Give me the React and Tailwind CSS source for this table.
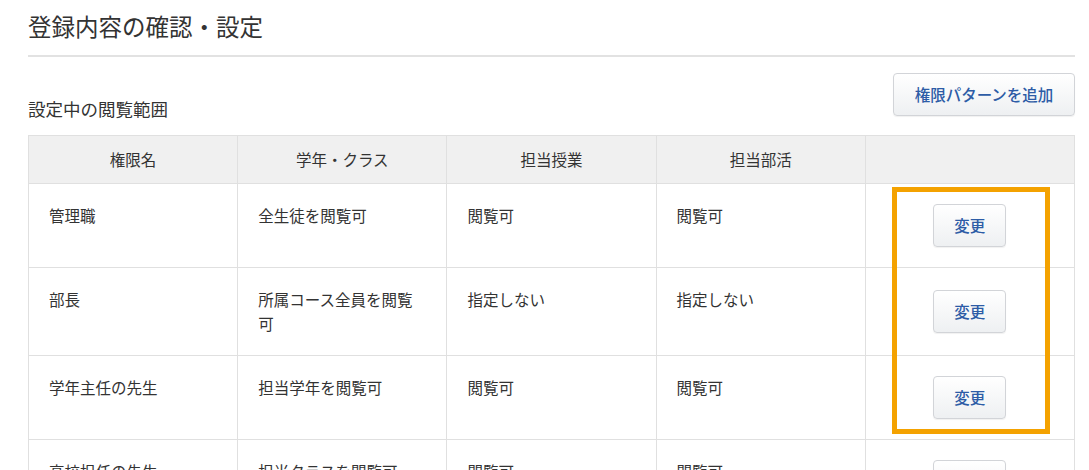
import React from "react";

const rows = [
  ["管理職", "全生徒を閲覧可", "閲覧可", "閲覧可"],
  ["部長", "所属コース全員を閲覧可", "指定しない", "指定しない"],
  ["学年主任の先生", "担当学年を閲覧可", "閲覧可", "閲覧可"],
  ["高校担任の先生", "担当クラスを閲覧可", "閲覧可", "閲覧可"],
];

const font = { fontFamily: '"Noto Sans CJK JP", "Noto Sans", sans-serif' };

function Btn({ children, className }) {
  return (
    <button
      className={
        "rounded-[4px] border border-[#d2d4d8] bg-gradient-to-b from-white to-[#eef0f2] text-[15.5px] font-medium text-[#2d5ca6] shadow-[0_1px_1px_rgba(0,0,0,0.06)] " +
        className
      }
    >
      {children}
    </button>
  );
}

export default function App() {
  return (
    <div className="relative min-h-[470px] bg-white text-[#333]" style={font}>
      <div className="pl-[28px] w-[1075px]">
        <h1 className="pt-[9px] pb-[11px] text-[23.5px] leading-[35px] font-normal border-b-2 border-[#e2e2e2]">
          登録内容の確認・設定
        </h1>
        <div className="mt-[16px] flex justify-between items-start">
          <div className="mt-[24px] text-[17.5px] leading-[24px]">設定中の閲覧範囲</div>
          <Btn className="h-[43px] w-[182px]">権限パターンを追加</Btn>
        </div>
        <table className="mt-[14px] w-[1047px] table-fixed border-collapse text-[15.5px] leading-[23.5px]">
          <thead>
            <tr className="bg-[#f0f0f0]">
              {["権限名", "学年・クラス", "担当授業", "担当部活", ""].map((h, i) => (
                <th
                  key={i}
                  className="h-[48px] border border-[#e0e0e0] font-normal text-center align-middle"
                >
                  {h}
                </th>
              ))}
            </tr>
          </thead>
          <tbody>
            {rows.map((r, i) => (
              <tr key={i}>
                {r.map((c, j) => (
                  <td key={j} className="border border-[#e0e0e0] px-[20px] py-[20px] align-top">
                    {c}
                  </td>
                ))}
                <td className="border border-[#e0e0e0] py-[20px] align-middle text-center">
                  <Btn className="h-[43px] w-[73px]">変更</Btn>
                </td>
              </tr>
            ))}
          </tbody>
        </table>
      </div>
      <div className="absolute left-[892px] top-[187px] h-[247px] w-[158px] border-[5px] border-[#f4a200]" />
    </div>
  );
}
